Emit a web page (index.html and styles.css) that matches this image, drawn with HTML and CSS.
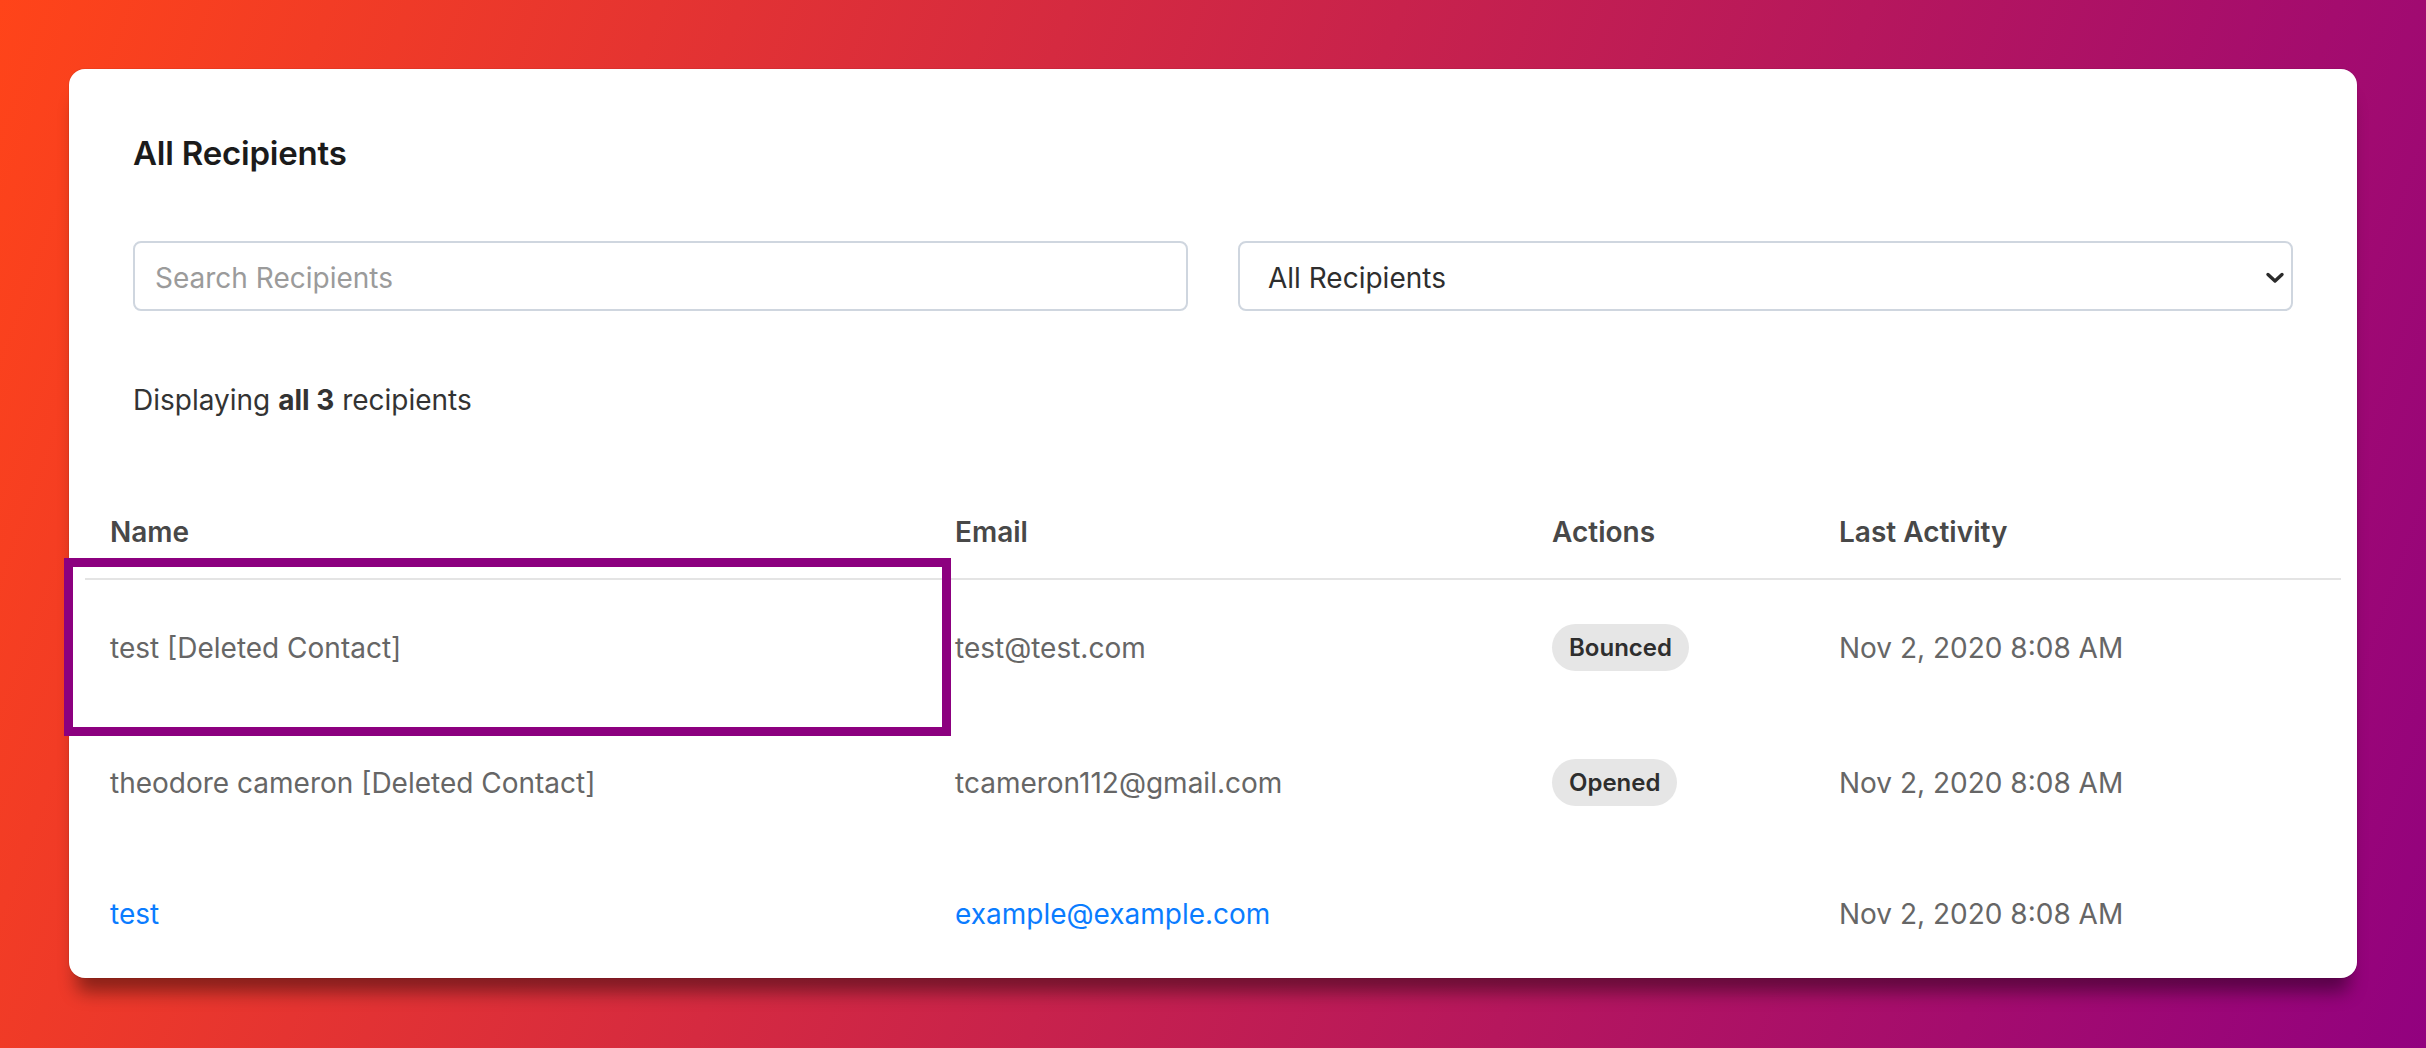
FILE: index.html
```html
<!DOCTYPE html>
<html>
<head>
  <meta charset="utf-8" />
  <title>All Recipients</title>
  <link rel="stylesheet" href="styles.css">
</head>
<body>

<div class="card">
  <div class="card-head">
    <h2 class="card-title">All Recipients</h2>

    <div class="filters">
      <input class="field" type="text" placeholder="Search Recipients">
      <div class="select-wrap">
        <select class="field field-select">
          <option>All Recipients</option>
          <option>Opened</option>
          <option>Bounced</option>
        </select>
        <svg class="chevron" width="20" height="12" viewBox="0 0 20 12">
          <path d="M3 2.5 L10 9 L17 2.5" fill="none" stroke="#2b2b2b" stroke-width="3.4" stroke-linecap="round" stroke-linejoin="round"/>
        </svg>
      </div>
    </div>

    <p class="count">Displaying <b>all 3</b> recipients</p>
  </div>

  <table class="recipients">
    <colgroup>
      <col class="col-name">
      <col class="col-email">
      <col class="col-actions">
      <col class="col-activity">
    </colgroup>
    <thead>
      <tr>
        <th>Name</th>
        <th>Email</th>
        <th>Actions</th>
        <th>Last Activity</th>
      </tr>
    </thead>
    <tbody>
      <tr>
        <td>test [Deleted Contact]</td>
        <td>test@test.com</td>
        <td><span class="badge">Bounced</span></td>
        <td>Nov 2, 2020 8:08 AM</td>
      </tr>
      <tr>
        <td>theodore cameron [Deleted Contact]</td>
        <td>tcameron112@gmail.com</td>
        <td><span class="badge">Opened</span></td>
        <td>Nov 2, 2020 8:08 AM</td>
      </tr>
      <tr>
        <td><a href="#">test</a></td>
        <td><a href="#">example@example.com</a></td>
        <td></td>
        <td>Nov 2, 2020 8:08 AM</td>
      </tr>
    </tbody>
  </table>

  <!-- highlight on the first row -->
  <div class="highlight"></div>
</div>

</body>
</html>
```

FILE: styles.css
```css
* { margin: 0; padding: 0; box-sizing: border-box; }

html, body {
  height: 100%;
}
body {
  padding: 69px;
  overflow: hidden;
  font-family: Inter, "Noto Sans", "Liberation Sans", sans-serif;
  background: linear-gradient(110deg, #ff4419 0%, #c8224c 50%, #92017f 100%);
}

.card {
  position: relative;
  background: #fff;
  border-radius: 16px;
  padding: 64px 16px 0;
  box-shadow: 0 0 0 1px rgba(0, 0, 0, 0.05),
              0 22px 18px -8px rgba(0, 0, 0, 0.42);
}

.card-head {
  padding: 0 48px;
}
.card-title {
  font-size: 33px;
  line-height: 40px;
  font-weight: 600;
  color: #1b1b1b;
  letter-spacing: -0.2px;
}

.filters {
  display: grid;
  grid-template-columns: 1fr 1fr;
  gap: 50px;
  margin-top: 68px;
}
.field {
  display: block;
  width: 100%;
  height: 70px;
  border: 2px solid #cfd6df;
  border-radius: 8px;
  padding: 4px 20px 0;
  font-family: inherit;
  font-size: 28px;
  color: #333;
  background: #fff;
  outline: none;
}
.field::placeholder {
  color: #9b9b9b;
}
.select-wrap {
  position: relative;
}
.field-select {
  -webkit-appearance: none;
  appearance: none;
  padding-left: 28px;
  color: #2e2e2e;
}
.chevron {
  position: absolute;
  right: 8px;
  top: 31px;
  pointer-events: none;
}

.count {
  margin-top: 69px;
  font-size: 28px;
  line-height: 40px;
  color: #333;
}
.count b {
  font-weight: 700;
}

.recipients {
  width: 100%;
  margin-top: 60px;
  border-collapse: collapse;
  table-layout: fixed;
  font-size: 28px;
  line-height: 40px;
}
.col-name { width: 845px; }
.col-email { width: 597px; }
.col-actions { width: 287px; }
.col-activity { width: 527px; }

.recipients th {
  padding: 32px 25px 26px;
  text-align: left;
  font-size: 28px;
  font-weight: 600;
  color: #484848;
  border-bottom: 2px solid #e4e4e4;
}
.recipients td {
  padding: 44px 25px;
  color: #666;
  vertical-align: middle;
  white-space: nowrap;
}
.recipients a {
  color: #0a7cff;
  text-decoration: none;
}

.badge {
  display: inline-block;
  vertical-align: middle;
  height: 47px;
  line-height: 47px;
  padding: 0 17px;
  border-radius: 24px;
  background: #e6e6e6;
  color: #2e2e2e;
  font-size: 24px;
  font-weight: 600;
}

.highlight {
  position: absolute;
  left: -5px;
  top: 489px;
  width: 887px;
  height: 178px;
  border: 9px solid #8c007f;
  pointer-events: none;
}
```
